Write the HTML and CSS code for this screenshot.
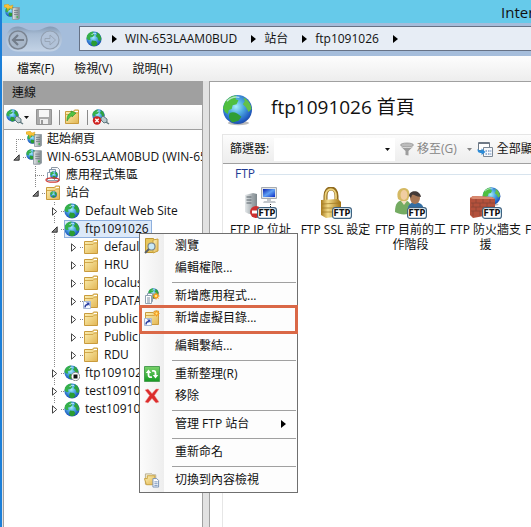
FILE: index.html
```html
<!DOCTYPE html>
<html lang="zh-Hant">
<head>
<meta charset="utf-8">
<title>Internet Information Services (IIS) 管理員</title>
<link rel="stylesheet" href="styles.css">
</head>
<body>
<svg class="defs" aria-hidden="true">
  <defs>
    <radialGradient id="sea" cx=".45" cy=".4" r=".65"><stop offset="0" stop-color="#a9ecfb"/><stop offset=".4" stop-color="#4fabe2"/><stop offset=".8" stop-color="#2361c4"/><stop offset="1" stop-color="#1b429c"/></radialGradient>
    <linearGradient id="gold" x2="1" y2="1"><stop offset="0" stop-color="#fdf3b8"/><stop offset="1" stop-color="#e2b552"/></linearGradient>
    <linearGradient id="brass"><stop offset="0" stop-color="#a87b1c"/><stop offset=".35" stop-color="#f3dc8a"/><stop offset="1" stop-color="#a37212"/></linearGradient>
    <linearGradient id="steel"><stop offset="0" stop-color="#e4e8ea"/><stop offset="1" stop-color="#7b858a"/></linearGradient>
    <linearGradient id="pill" x2="0" y2="1"><stop offset="0" stop-color="#8399b4"/><stop offset=".3" stop-color="#a7bbd3"/><stop offset="1" stop-color="#c3d3e6"/></linearGradient>
    <linearGradient id="screen" x2="1" y2="1"><stop offset="0" stop-color="#0a1fae"/><stop offset=".5" stop-color="#5fa0f4"/><stop offset="1" stop-color="#0b2bc4"/></linearGradient>
    <linearGradient id="leaf" x2="0" y2="1"><stop offset="0" stop-color="#7bd36b"/><stop offset="1" stop-color="#149a22"/></linearGradient>
  </defs>
  <symbol id="globe" viewBox="0 0 32 32">
    <ellipse cx="17" cy="29.5" rx="11" ry="2.2" fill="#777" opacity=".5"/>
    <circle cx="16" cy="15.5" r="15" fill="url(#sea)"/>
    <path d="M3 8C6 3 11 1 15 1l-1 4 3 1-2 4-4 1-1 4-3 1-1 4-3-2-2-4z" fill="#4fbf3e"/>
    <path d="M8 19c4-2 8 0 12 4l-3 4-6 2c-3-2-5-6-3-10z" fill="#2f9e34"/>
    <path d="M22 3c5 2 8 7 8.500 12l-3 3-3-5-3-3 2-3z" fill="#63c04a"/>
    <path d="M5 7c4-4 9-5 13-4" fill="none" stroke="#d8f7ff" stroke-width="1.500" opacity=".7"/>
  </symbol>
  <symbol id="globe-small" viewBox="0 0 16 16">
    <circle cx="8" cy="8" r="7.600" fill="url(#sea)"/>
    <path d="M1 4.500C2.500 2 5 .6 7.500.5L7 2.500 8.500 4 6.500 6 4 6.500 4.500 9 2.500 9 .5 7.500z" fill="#35b04a"/>
    <path d="M10.500 1l3 2 1.800 4-.8 3-2-.5-1-3L9.500 5 11 3.500z" fill="#2fa23d"/>
    <path d="M6 9.500l4 .5 1.500 2.500L9.500 15H6.500L5 12.500z" fill="#2b9c33"/>
    <path d="M5.500 4c1-1.500 3-2 4.500-1.500" fill="none" stroke="#dff8ff" opacity=".8"/>
  </symbol>
  <symbol id="folder" viewBox="0 0 16 16">
    <path d="M1.500 14.500v-12h8l1-1.500h4v13.500z" fill="url(#gold)" stroke="#c99b3d"/>
    <path d="M2 5.500h8l1.500-1.500h3" fill="none" stroke="#d2a84c"/><path d="M11 2.500h3" stroke="#fff"/>
  </symbol>
  <symbol id="shortcut" viewBox="0 0 8 8"><path d="M.5.5h7v7h-7z" fill="#f7faff" stroke="#a7b9d4"/><path d="M2 6.500c0-2 1-3 3-3" stroke="#2a3fa0" stroke-width="1.400" fill="none"/><path d="M3 1.500H6.500V5z" fill="#2a3fa0"/></symbol>
  <symbol id="folder-link" viewBox="0 0 16 16"><use href="#folder"/><use href="#shortcut" x="0" y="8" width="8" height="8"/></symbol>
  <symbol id="spark" viewBox="0 0 8 8"><path d="M4 0l1 2 2-1-1 2 2 1-2 1 1 2-2-1-1 2-1-2-2 1 1-2-2-1 2-1-1-2 2 1z" fill="#f59a1b"/><circle cx="4" cy="4" r="1.300" fill="#ffe680"/></symbol>
  <symbol id="folder-new" viewBox="0 0 16 16"><use href="#folder"/><use href="#shortcut" x="0" y="8" width="8" height="8"/><use href="#spark" x="9" y="0" width="7" height="7"/></symbol>
  <symbol id="tower" viewBox="0 0 8 13"><path d="M.5 1.500L2 .5h5.500v11l-1.500 1h-5.500z" fill="url(#steel)" stroke="#8d979f" stroke-width=".8"/><path d="M2 3.500h4M2 5.500h4M2 7.500h4" stroke="#6a757d" stroke-width=".7"/><path d="M4.500 10h1.500" stroke="#33b443" stroke-width="1.500"/></symbol>
  <symbol id="server" viewBox="0 0 16 16"><use href="#globe-small" x="0" y="0" width="11" height="11"/><use href="#tower" x="7" y="1" width="9" height="15"/></symbol>
  <symbol id="start" viewBox="0 0 16 16"><use href="#globe-small" x="1" y="2" width="11" height="11"/><path d="M0 1l4-1 2 2 3-1-1 4-3-1-1 3-1-3-3-1z" fill="#f8c23a" stroke="#d08f10" stroke-width=".4"/><use href="#tower" x="8" y="3" width="8" height="13"/></symbol>
  <symbol id="pools" viewBox="0 0 16 16"><path d="M6.500.5h6l2 2v11h-8z" fill="#f7f9fb" stroke="#8c98a5"/><path d="M4.500 2.500h6v9h-6z" fill="#e6eef6" stroke="#8495aa"/><path d="M2.500 5.500h7v8h-7z" fill="#fff" stroke="#90a0b3"/><use href="#globe-small" x="5" y="4" width="8" height="8"/><ellipse cx="7.500" cy="13" rx="6.500" ry="2.200" fill="none" stroke="#ce3a35" stroke-width="1.300"/></symbol>
  <symbol id="sites" viewBox="0 0 16 16"><use href="#folder"/><use href="#globe-small" x="5" y="6" width="7" height="7"/></symbol>
  <symbol id="globe-stop" viewBox="0 0 16 16"><use href="#globe-small" x="0" y="0" width="15" height="15"/><circle cx="11.500" cy="11.500" r="4.200" fill="#fff" stroke="#777" stroke-width=".8"/><path d="M9.500 9.500h4v4h-4z" fill="#111"/></symbol>
  <symbol id="plug" viewBox="0 0 18 16"><use href="#globe-small" x="0" y="0" width="13" height="13"/><path d="M9 9l2-2 4 3 0 3-3 1-3-3z" fill="#b8cad0" stroke="#61797f"/><path d="M14 13l3 2" stroke="#61797f" stroke-width="1.500"/></symbol>
  <symbol id="unplug" viewBox="0 0 18 16"><use href="#plug"/><circle cx="5" cy="11.500" r="4.200" fill="#cf2422"/><path d="M3.300 9.800l3.400 3.400M6.700 9.800l-3.400 3.400" stroke="#fff" stroke-width="1.300"/></symbol>
  <symbol id="save" viewBox="0 0 16 16"><path d="M.5.5h15v15h-15z" fill="#aaa" stroke="#929292"/><path d="M3 1h10v7H3z" fill="#f7f7f7"/><path d="M4 10h8v5H4z" fill="#eee"/><path d="M5 11h2v4H5z" fill="#999"/></symbol>
  <symbol id="folder-up" viewBox="0 0 16 16"><use href="#folder"/><path d="M3 12c0-5 1-7 4-8V2l5 2-4 4V6.500C6 8 5 9 3 12z" fill="#52c443" stroke="#298f2a" stroke-width=".6"/></symbol>
  <symbol id="browse" viewBox="0 0 16 16"><path d="M1.500.5h8l1 2v12h-9z" fill="#e8c75d" stroke="#c19932"/><path d="M9 2l5-1v12l-5 2z" fill="url(#gold)" stroke="#c9a13d"/><circle cx="7.500" cy="8.500" r="3.500" fill="#c9eaf8" stroke="#7a8790" stroke-width="1.200"/><path d="M5 11l-4 4" stroke="#596068" stroke-width="2"/></symbol>
  <symbol id="app-new" viewBox="0 0 16 16"><use href="#globe-small" x="4" y="0" width="11" height="11"/><path d="M3.500 5.500h5v8h-5z" fill="#fff" stroke="#8ea0b0"/><path d="M1.500 7.500h6v8h-6z" fill="#fff" stroke="#8ea0b0"/><path d="M3 10h3M3 12h3M3 14h3" stroke="#57708a" stroke-width=".8"/><use href="#spark" x="8" y="4" width="8" height="8"/></symbol>
  <symbol id="refresh" viewBox="0 0 16 16"><path d="M.5.5h15v15h-15z" fill="url(#leaf)" stroke="#4d9f55"/><path d="M4.500 6v3c0 2 1.500 2.500 3.500 2M11.500 10V7c0-2-1.500-2.500-3.500-2" fill="none" stroke="#fff" stroke-width="1.800"/><path d="M1.800 7L4.500 3.500 7.200 7zM8.800 9L11.500 12.500 14.200 9z" fill="#fff"/></symbol>
  <symbol id="remove" viewBox="0 0 16 16"><path d="M1 2l3-1 4 4.500L12 1h3l-4.500 6.500L15 14l-3 1-4-4.500L4 15l-3-1 4.500-6.500z" fill="#dc2c2c" stroke="#f0a09c" stroke-width=".5"/></symbol>
  <symbol id="content" viewBox="0 0 17 16"><path d="M1.500 12.500V1.500h7l1 1h3v8z" fill="#f3efd9" stroke="#b7ad8d"/><path d="M.5 6.500h3V3.500h8v9.500h-9z" fill="url(#gold)" stroke="#c9a13d"/><path d="M9.500 6.500h4l2 2v7h-6z" fill="#fff" stroke="#7590b5"/><path d="M11 10h3.500M11 12h3.500M11 14h3.500" stroke="#476fa6" stroke-width=".8"/></symbol>
  <symbol id="funnel" viewBox="0 0 14 14"><ellipse cx="7" cy="3" rx="6.500" ry="2" fill="#bcbcbc" stroke="#8f8f8f" stroke-width=".7"/><path d="M.8 4.500L5.500 9v4l3 .5V9l4.700-4.500C10 6.500 4 6.500.8 4.500z" fill="#9d9d9d"/></symbol>
  <symbol id="show-all" viewBox="0 0 16 16"><path d="M1.500 1.500h11v8h-11z" fill="#fff" stroke="#6e7986"/><path d="M1 2.500h12" stroke="#6e7986"/><path d="M6.500 6.500h9v9h-9z" fill="#f6f8fb" stroke="#7b8795"/><path d="M8.500 10h1.500M11 10h1.500M13.300 10h1M8.500 13h1.500M11 13h1.500M13.300 13h1" stroke="#3e6fb0" stroke-width="1.200"/><path d="M.5 8c0 3 1 4 4 4v2l4-3-4-3.500v2C3 9.500 2 9 .5 8z" fill="#2b8bd8"/></symbol>
  <symbol id="caret" viewBox="0 0 5 3"><path d="M0 0h5L2.500 3z" fill="currentColor"/></symbol>
  <symbol id="chevron" viewBox="0 0 5 8"><path d="M0 0l5 4-5 4z" fill="currentColor"/></symbol>
  <symbol id="closed" viewBox="0 0 6 9"><path d="M.5.8v7.400L4.700 4.500z" fill="#fff" stroke="#444"/></symbol>
  <symbol id="open" viewBox="0 0 7 7"><path d="M6.200.8v5.400H.8z" fill="#888" stroke="#222" stroke-width=".9"/></symbol>
  <symbol id="badge" viewBox="0 0 20 12"><rect x=".6" y=".6" width="18.800" height="10.800" rx="2.500" fill="#fff" stroke="#3f6381" stroke-width="1.200"/><text x="10" y="9" text-anchor="middle" class="badge-text">FTP</text></symbol>
  <symbol id="ftp-ip" viewBox="0 0 32 32"><path d="M0 8l8-2 4 1v19l-8 1-4-2z" fill="url(#steel)"/><path d="M1.500 10h5M1.500 13h5M1.500 16h5" stroke="#58636a"/><path d="M8 7v20" stroke="#949da2"/><path d="M16.500.5h15v11h-15z" fill="#e2e4e6" stroke="#a6abb0"/><path d="M18 2h12v8H18z" fill="url(#screen)"/><path d="M22 12h4v2h4l1 2H18l1-2h3z" fill="#c2c7cc"/><path d="M25.500 17v4" stroke="#222" stroke-dasharray="1 1"/><circle cx="11" cy="25" r="6" fill="#cd3030"/><path d="M7 23.500h8v3H7z" fill="#fff"/><use href="#badge" x="12" y="20" width="20" height="12"/></symbol>
  <symbol id="ftp-ssl" viewBox="0 0 32 32"><path d="M5.500 15V9c0-10 11-10 11 0v6" fill="none" stroke="#8f691c" stroke-width="4"/><path d="M5.500 15V9c0-9 10.500-9 10.500 0v6" fill="none" stroke="#edd27c" stroke-width="1.800"/><path d="M1 13l17-1 3 3v14l-15 2-5-3z" fill="url(#brass)"/><path d="M2 17l18-1M2 21h18M2 25h18" stroke="#9e7721" opacity=".7"/><use href="#badge" x="12" y="20" width="20" height="12"/></symbol>
  <symbol id="ftp-people" viewBox="0 0 32 32"><path d="M0 25c0-9 3-11 8-12 6 0 9 4 9 13-6 2-12 2-17-1z" fill="#74ab62"/><path d="M13 20c2-5 7-6 11-4 5 2 5 6 5 10H14z" fill="#336ea4"/><path d="M3 12c-2-7 1-11 6-11s7 5 4 12l-5 2z" fill="#d5b963"/><ellipse cx="9" cy="8" rx="3.500" ry="5" fill="#f0cda1"/><path d="M6 14l3 4 3-4" fill="#f4dfc2"/><ellipse cx="20" cy="11" rx="5" ry="6" fill="#a87755"/><path d="M14 9c0-6 11-7 12 1-5 0-7-3-9-2l-1 3z" fill="#443a38"/><use href="#badge" x="12" y="20" width="20" height="12"/></symbol>
  <symbol id="ftp-wall" viewBox="0 0 32 32"><use href="#globe" x="12" y="0" width="19" height="19"/><path d="M0 11l3-2 19 1 3 2v15L3 31l-3-3z" fill="#b4513c"/><path d="M0 11l3-2 19 1 3 2-22 0z" fill="#d98a70"/><path d="M1 16h24M1 20h24M1 24h20M6 12v4M13 12v4M20 12v4M3 16v4M10 16v4M17 16v4M6 20v4M13 20v4M3 24v5M10 24v5" stroke="#8b4436" stroke-width=".8" fill="none"/><use href="#badge" x="12" y="20" width="20" height="12"/></symbol>
</svg>

<div class="window">
  <header class="titlebar"><svg class="i16"><use href="#start"/></svg><h1>Internet Information Services (IIS) 管理員</h1></header>

  <nav class="navbar" aria-label="位置">
    <div class="history">
      <svg class="pill" viewBox="0 0 56 26" aria-hidden="true"><path d="M12 .5c6 0 7 4 16 4s10-4 16-4c16 0 16 25 0 25H12c-16 0-16-25 0-25z" fill="url(#pill)"/></svg>
      <button aria-label="上一頁"><svg viewBox="0 0 20 20"><circle cx="10" cy="10" r="9" fill="#a8b7c9" stroke="#7b8592" stroke-width="1.500"/><path d="M16 10H5M10 5l-5 5 5 5" fill="none" stroke="#737d8a" stroke-width="2.200"/></svg></button>
      <button aria-label="下一頁"><svg viewBox="0 0 20 20"><circle cx="10" cy="10" r="9" fill="#b1c2d8" stroke="#929fb0" stroke-width="1.200"/><path d="M5 8.500h5V5l5.500 5-5.500 5v-3.500H5z" fill="none" stroke="#99a6b7"/></svg></button>
    </div>
    <div class="address">
      <svg class="i16"><use href="#globe-small"/></svg>
      <svg class="chev"><use href="#chevron"/></svg><a href="#">WIN-653LAAM0BUD</a>
      <svg class="chev"><use href="#chevron"/></svg><a href="#">站台</a>
      <svg class="chev"><use href="#chevron"/></svg><a href="#">ftp1091026</a>
      <svg class="chev"><use href="#chevron"/></svg>
    </div>
  </nav>

  <div class="menubar"><button>檔案(F)</button><button>檢視(V)</button><button>說明(H)</button></div>

  <div class="panes">
    <aside class="connections">
      <h2>連線</h2>
      <div class="tools">
        <button aria-label="連線"><svg class="i18"><use href="#plug"/></svg><svg class="caret"><use href="#caret"/></svg></button>
        <button aria-label="儲存" class="save"><svg class="i16"><use href="#save"/></svg></button>
        <i class="sep"></i>
        <button aria-label="向上"><svg class="i16"><use href="#folder-up"/></svg></button>
        <i class="sep"></i>
        <button aria-label="中斷連線"><svg class="i18"><use href="#unplug"/></svg></button>
      </div>
      <ul class="tree root">
        <li><a class="row" href="#"><span class="toggle none"></span><svg class="i16"><use href="#start"/></svg><span class="label">起始網頁</span></a></li>
        <li><a class="row" href="#"><span class="toggle"><svg class="opened"><use href="#open"/></svg></span><svg class="i16"><use href="#server"/></svg><span class="label">WIN-653LAAM0BUD (WIN-653</span></a>
          <ul class="tree server">
            <li><a class="row" href="#"><span class="toggle none"></span><svg class="i16"><use href="#pools"/></svg><span class="label">應用程式集區</span></a></li>
            <li><a class="row" href="#"><span class="toggle"><svg class="opened"><use href="#open"/></svg></span><svg class="i16"><use href="#sites"/></svg><span class="label">站台</span></a>
              <ul class="tree sites">
                <li><a class="row" href="#"><span class="toggle"><svg class="closed"><use href="#closed"/></svg></span><svg class="i16"><use href="#globe-small"/></svg><span class="label">Default Web Site</span></a></li>
                <li><a class="row selected" href="#"><span class="toggle"><svg class="opened"><use href="#open"/></svg></span><span class="pick"><svg class="i16"><use href="#globe-small"/></svg><span class="label">ftp1091026</span></span></a>
                  <ul class="tree">
                    <li><a class="row" href="#"><span class="toggle"><svg class="closed"><use href="#closed"/></svg></span><svg class="i16"><use href="#folder"/></svg><span class="label">default</span></a></li>
                    <li><a class="row" href="#"><span class="toggle"><svg class="closed"><use href="#closed"/></svg></span><svg class="i16"><use href="#folder"/></svg><span class="label">HRU</span></a></li>
                    <li><a class="row" href="#"><span class="toggle"><svg class="closed"><use href="#closed"/></svg></span><svg class="i16"><use href="#folder"/></svg><span class="label">localuser</span></a></li>
                    <li><a class="row" href="#"><span class="toggle"><svg class="closed"><use href="#closed"/></svg></span><svg class="i16"><use href="#folder-link"/></svg><span class="label">PDATA</span></a></li>
                    <li><a class="row" href="#"><span class="toggle"><svg class="closed"><use href="#closed"/></svg></span><svg class="i16"><use href="#folder"/></svg><span class="label">public</span></a></li>
                    <li><a class="row" href="#"><span class="toggle"><svg class="closed"><use href="#closed"/></svg></span><svg class="i16"><use href="#folder"/></svg><span class="label">Public</span></a></li>
                    <li><a class="row" href="#"><span class="toggle"><svg class="closed"><use href="#closed"/></svg></span><svg class="i16"><use href="#folder"/></svg><span class="label">RDU</span></a></li>
                  </ul>
                </li>
                <li><a class="row" href="#"><span class="toggle"><svg class="closed"><use href="#closed"/></svg></span><svg class="i16"><use href="#globe-stop"/></svg><span class="label">ftp109102</span></a></li>
                <li><a class="row" href="#"><span class="toggle"><svg class="closed"><use href="#closed"/></svg></span><svg class="i16"><use href="#globe-small"/></svg><span class="label">test10910</span></a></li>
                <li><a class="row" href="#"><span class="toggle"><svg class="closed"><use href="#closed"/></svg></span><svg class="i16"><use href="#globe-small"/></svg><span class="label">test10910</span></a></li>
              </ul>
            </li>
          </ul>
        </li>
      </ul>
    </aside>

    <main class="home">
      <div class="heading"><svg><use href="#globe"/></svg><h2>ftp1091026 首頁</h2></div>
      <section class="features">
        <div class="filter">
          <label for="filter">篩選器:</label>
          <div class="combo"><input id="filter" type="text"><button aria-label="篩選記錄"><svg class="caret"><use href="#caret"/></svg></button></div>
          <button class="go" disabled><svg class="i14"><use href="#funnel"/></svg>移至(G)<svg class="caret"><use href="#caret"/></svg></button>
          <button class="all"><svg class="i16"><use href="#show-all"/></svg>全部顯示(A)</button>
        </div>
        <h3>FTP</h3>
        <div class="tiles">
          <a href="#"><svg><use href="#ftp-ip"/></svg>FTP IP 位址</a>
          <a href="#"><svg><use href="#ftp-ssl"/></svg>FTP SSL 設定</a>
          <a href="#"><svg><use href="#ftp-people"/></svg>FTP 目前的工作階段</a>
          <a href="#"><svg><use href="#ftp-wall"/></svg>FTP 防火牆支援</a>
          <a href="#"><svg></svg>FTP 要求篩選</a>
        </div>
      </section>
    </main>
  </div>
</div>

<div class="context" role="menu">
  <button role="menuitem"><svg class="i16"><use href="#browse"/></svg>瀏覽</button>
  <button role="menuitem"><span class="i16"></span>編輯權限...</button>
  <hr>
  <button role="menuitem"><svg class="i16"><use href="#app-new"/></svg>新增應用程式...</button>
  <button role="menuitem" class="marked"><svg class="i16"><use href="#folder-new"/></svg>新增虛擬目錄...</button>
  <hr>
  <button role="menuitem"><span class="i16"></span>編輯繫結...</button>
  <hr>
  <button role="menuitem"><svg class="i16"><use href="#refresh"/></svg>重新整理(R)</button>
  <button role="menuitem"><svg class="i16"><use href="#remove"/></svg>移除</button>
  <hr>
  <button role="menuitem"><span class="i16"></span>管理 FTP 站台<svg class="chev"><use href="#chevron"/></svg></button>
  <hr>
  <button role="menuitem"><span class="i16"></span>重新命名</button>
  <hr>
  <button role="menuitem"><svg class="i16"><use href="#content"/></svg>切換到內容檢視</button>
</div>
</body>
</html>
```
FILE: styles.css
```css
* { box-sizing: border-box; }
body {
  margin: 0;
  overflow: hidden;
  color: #111;
  font: 12px/18px "Open Sans", "Noto Sans CJK TC", sans-serif;
}
h1, h2, h3, ul { margin: 0; padding: 0; font-weight: 400; }
ul { list-style: none; }
a { color: inherit; text-decoration: none; }
button {
  display: flex;
  align-items: center;
  padding: 0;
  border: 0;
  background: none;
  color: inherit;
  font: inherit;
  white-space: nowrap;
}
svg { display: block; flex: none; }
.defs { position: absolute; width: 0; height: 0; }
.i14 { width: 14px; height: 14px; }
.i16 { width: 16px; height: 16px; flex: none; }
.i18 { width: 18px; height: 16px; }
.caret { width: 5px; height: 3px; }
.chev { width: 5px; height: 8px; color: #000; }
.badge-text { font: 700 8px "DejaVu Sans", sans-serif; fill: #111; }

.window {
  display: flex;
  flex-direction: column;
  height: 100vh;
  border-left: 2px solid #1c7fd8;
  background: #e2e2e2;
}
.titlebar {
  display: flex;
  align-items: center;
  height: 23px;
  padding-left: 2px;
  background: #66caea;
  overflow: hidden;
}
.titlebar h1 { margin-left: 481px; font-size: 15px; white-space: nowrap; }

.navbar { display: flex; height: 33px; padding: 3px 0 5px 4px; background: #a5bddb; }
.history { display: flex; position: relative; gap: 12px; width: 73px; padding: 4px 0 0 2px; }
.history .pill { position: absolute; left: 0; top: 0; width: 56px; height: 26px; }
.history button { position: relative; width: 20px; height: 20px; }
.history button svg { width: 20px; height: 20px; }
.address {
  display: flex;
  flex: 1;
  align-items: center;
  padding-left: 6px;
  border: 1px solid #667286;
  border-right: 0;
  background: #e7edf5;
  white-space: nowrap;
}
.address .chev { margin: 0 8px 0 14px; }
.address .i16 + .chev { margin-left: 10px; }

.menubar {
  display: flex;
  gap: 20px;
  height: 25px;
  padding-left: 15px;
  background: linear-gradient(#fdfdfd, #ededed);
}

.panes { display: flex; flex: 1; gap: 6px; min-height: 0; padding-left: 1px; }
.connections {
  flex: none;
  width: 200px;
  border: 1px solid #a0a0a0;
  border-width: 0 1px;
  background: #fff;
  overflow: hidden;
}
.connections h2 { height: 24px; padding-left: 8px; background: #a0a0a0; font-size: 12px; line-height: 24px; }
.tools {
  display: flex;
  align-items: center;
  height: 25px;
  padding-left: 2px;
  border-bottom: 1px solid #a0a0a0;
  background: linear-gradient(#fff, #eee);
}
.tools .save { margin-left: 7px; }
.tools .sep { width: 1px; height: 15px; margin: 0 4px 0 7px; background: #8a8a8a; }

.tree .tree { padding-left: 19px; }
.tree.root { padding-left: 7px; }
.root, .server, .sites {
  background: repeating-linear-gradient(#888 0 1px, transparent 1px 2px) no-repeat;
}
.root { background-size: 1px 18px; background-position: 12px 9px; }
.server { background-size: 1px 27px; background-position: 24px 0; }
.sites { background-size: 1px calc(100% - 9px); background-position: 24px 0; }
.row { display: flex; align-items: center; height: 18px; white-space: nowrap; }
.toggle {
  display: flex;
  flex: none;
  align-items: center;
  width: 15px;
  height: 10px;
  padding-left: 2px;
  background: linear-gradient(#fff, #fff) 0 0 / 11px 100% no-repeat,
    repeating-linear-gradient(90deg, #888 0 1px, transparent 1px 2px) 12px 5px / 3px 1px no-repeat;
}
.toggle.none { background: repeating-linear-gradient(90deg, #888 0 1px, transparent 1px 2px) 5px 5px / 10px 1px no-repeat; }
.opened { width: 7px; height: 7px; }
.closed { width: 6px; height: 9px; margin-left: 1px; }
.label { margin-left: 5px; }
.pick {
  display: flex;
  align-items: center;
  height: 18px;
  padding-right: 3px;
  background: #dce9f9;
  outline: 1px solid #8eb0de;
  outline-offset: -1px;
}

.home {
  flex: 1;
  min-width: 0;
  padding: 12px 0 0 12px;
  border: 1px solid #a0a0a0;
  border-width: 1px 0 0 1px;
  background: #fff;
  overflow: hidden;
}
.heading { display: flex; align-items: center; gap: 18px; height: 40px; padding-bottom: 8px; }
.heading svg { width: 31px; height: 32px; }
.heading h2 { font-size: 19px; line-height: 24px; white-space: nowrap; padding-bottom: 6px; }
.features { height: 100%; border: 1px solid #e6e6e6; border-right: 0; }
.filter {
  display: flex;
  align-items: center;
  height: 29px;
  padding-left: 7px;
  border-bottom: 1px solid #a0a0a0;
  background: linear-gradient(#fcfcfc, #ededed);
  white-space: nowrap;
}
.filter label { flex: none; width: 44px; }
.combo { display: flex; flex: none; width: 121px; height: 23px; background: #fff; }
.combo input { flex: 1; min-width: 0; border: 0; background: none; font: inherit; }
.combo button { width: 10px; }
.filter .go { gap: 3px; margin-left: 5px; color: #868686; }
.filter .go .caret { margin-left: 7px; }
.filter .all { gap: 4px; margin-left: 5px; }
.features h3 { display: flex; align-items: center; gap: 4px; height: 20px; padding-left: 12px; color: #1e3a92; font-size: 12px; }
.features h3::after { content: ""; flex: 1; height: 1px; background: #d8e4ee; }
.tiles { display: grid; grid-template-columns: repeat(5, 75px); padding-top: 3px; line-height: 15px; text-align: center; }
.tiles svg { width: 32px; height: 32px; margin: 0 auto 3px; }

.context {
  position: absolute;
  left: 139px;
  top: 233px;
  width: 159px;
  padding: 1px 1px 1px 2px;
  border: 1px solid #6f6f6f;
  background: linear-gradient(90deg, #fcfcfc, #eee) 0 0 / 24px 100% no-repeat #fdfdfd;
}
.context button { position: relative; width: 100%; height: 22px; gap: 15px; padding-left: 2px; }
.context hr { height: 1px; margin: 3px 0 2px 30px; border: 0; background: #a0a0a0; }
.context button .chev { margin: 0 10px 0 auto; }
.context .marked::after {
  content: "";
  position: absolute;
  inset: -2px -2px -5px -3px;
  border: 3px solid #da6847;
}
```
